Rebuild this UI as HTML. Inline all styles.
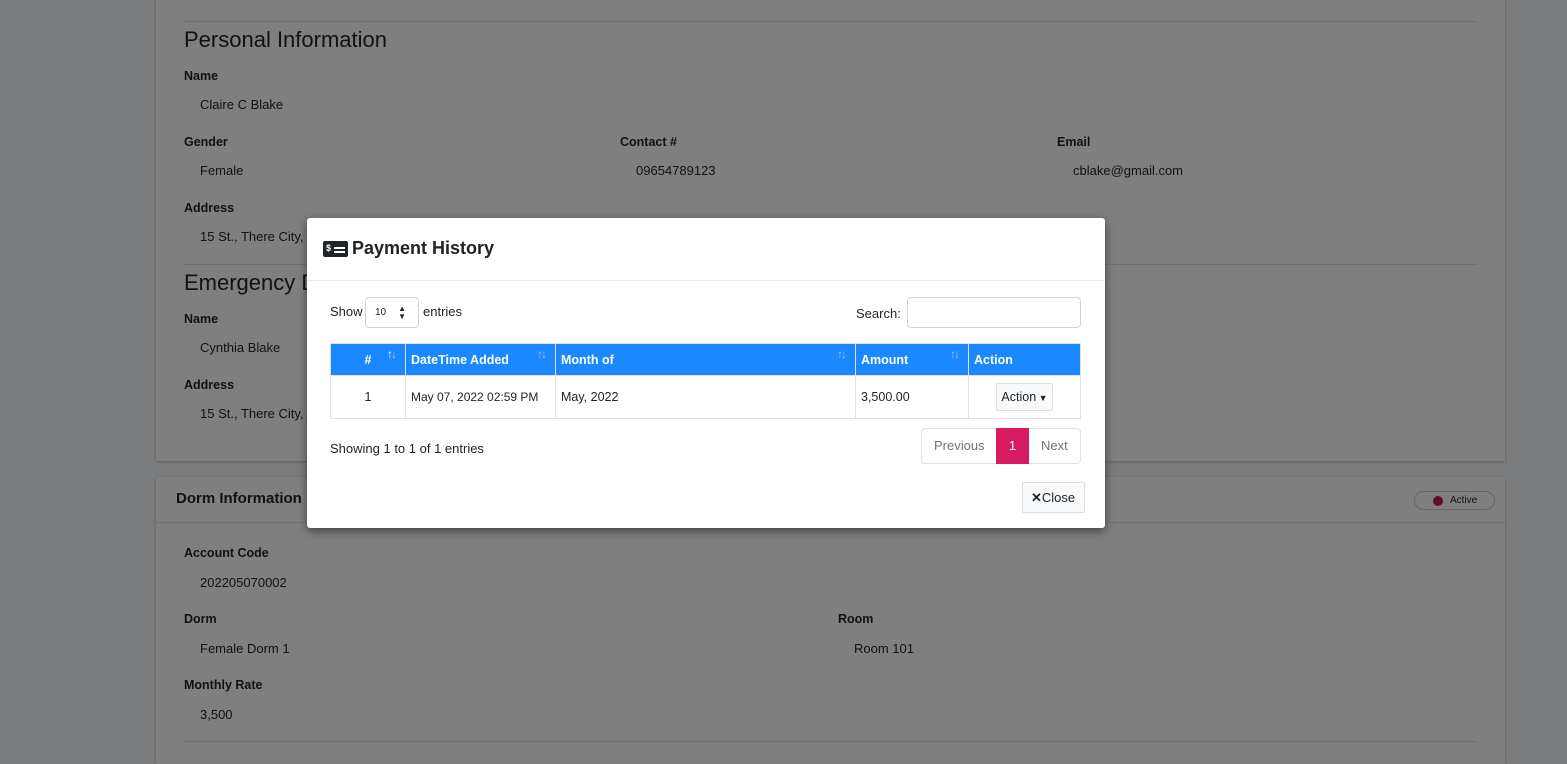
<!DOCTYPE html>
<html style="overflow:hidden;height:764px"><head><meta charset="utf-8"><style>
*{box-sizing:border-box}
body{margin:0;width:1567px;height:764px;overflow:hidden;background:#f4f6f9;font-family:"Liberation Sans",sans-serif;font-size:13px;color:#212529;position:relative}
.card{position:absolute;left:156px;width:1349px;background:#fff;box-shadow:0 0 1px rgba(0,0,0,.13),0 1px 3px rgba(0,0,0,.2)}
.a{position:absolute;white-space:nowrap}
.lb{font-weight:bold;font-size:12.5px}
.hr{position:absolute;height:1px;background:#dee2e6}
.ov{position:absolute;left:0;top:0;width:1567px;height:764px;background:rgba(0,0,0,.5)}
.modal{position:absolute;left:307px;top:218px;width:798px;height:310px;background:#fff;border-radius:3px;box-shadow:0 3px 9px rgba(0,0,0,.5)}
th{background:#1a88ff;color:#fff;text-align:left;font-size:12.5px;padding:0 5px;height:32px;border-right:1px solid #dee2e6;position:relative;white-space:nowrap}
td{font-size:12.5px;padding:0 5px;height:43px;border:1px solid #dee2e6;white-space:nowrap}
table{border-collapse:collapse;position:absolute;left:23px;top:125px;width:751px;border:1px solid #dee2e6;table-layout:fixed}
.sort{position:absolute;right:10px;top:3px;color:#9cc9ff;font-size:12px;letter-spacing:-2px}
</style></head><body>
<div class="card" style="top:-10px;height:471px">
 <div class="hr" style="left:28px;right:28px;top:31px"></div>
 <div class="a" style="left:28px;top:37px;font-size:22px">Personal Information</div>
 <div class="a lb" style="left:28px;top:79px">Name</div>
 <div class="a" style="left:44px;top:107px">Claire C Blake</div>
 <div class="a lb" style="left:28px;top:145px">Gender</div>
 <div class="a" style="left:44px;top:173px">Female</div>
 <div class="a lb" style="left:464px;top:145px">Contact #</div>
 <div class="a" style="left:480px;top:173px">09654789123</div>
 <div class="a lb" style="left:901px;top:145px">Email</div>
 <div class="a" style="left:917px;top:173px">cblake@gmail.com</div>
 <div class="a lb" style="left:28px;top:211px">Address</div>
 <div class="a" style="left:44px;top:239px">15 St., There City, Any Province</div>
 <div class="hr" style="left:28px;right:28px;top:274px"></div>
 <div class="a" style="left:28px;top:280px;font-size:22px">Emergency Details</div>
 <div class="a lb" style="left:28px;top:322px">Name</div>
 <div class="a" style="left:44px;top:350px">Cynthia Blake</div>
 <div class="a" style="left:936px;top:350px">er</div>
 <div class="a lb" style="left:28px;top:388px">Address</div>
 <div class="a" style="left:44px;top:416px">15 St., There City, Any Province</div>
</div>
<div class="card" style="top:477px;height:287px">
 <div class="a" style="left:20px;top:13px;font-size:15px;font-weight:bold">Dorm Information</div>
 <div class="a" style="left:1258px;top:14px;width:81px;height:19px;border:1px solid #ccc;border-radius:10px;font-size:10px;padding:3px 0 0 35px">Active<span style="position:absolute;left:18px;top:4px;width:10px;height:10px;border-radius:50%;background:#c2185b"></span></div>
 <div class="hr" style="left:0;right:0;top:45px"></div>
 <div class="a lb" style="left:28px;top:69px">Account Code</div>
 <div class="a" style="left:44px;top:98px">202205070002</div>
 <div class="a lb" style="left:28px;top:135px">Dorm</div>
 <div class="a" style="left:44px;top:164px">Female Dorm 1</div>
 <div class="a lb" style="left:682px;top:135px">Room</div>
 <div class="a" style="left:698px;top:164px">Room 101</div>
 <div class="a lb" style="left:28px;top:201px">Monthly Rate</div>
 <div class="a" style="left:44px;top:230px">3,500</div>
 <div class="hr" style="left:28px;right:28px;top:264px"></div>
</div>
<div class="ov"></div>
<div class="modal">
 <div class="a" style="left:16px;top:23px;width:25px;height:16px;background:#212529;border-radius:2px;color:#fff;font-size:9px;font-weight:bold;padding:2px 0 0 3px">$<span style="position:absolute;left:11px;top:6px;width:11px;height:2px;background:#fff"></span><span style="position:absolute;left:11px;top:10px;width:11px;height:2px;background:#fff"></span></div>
 <div class="a" style="left:45px;top:20px;font-size:18px;font-weight:bold;color:#222">Payment History</div>
 <div class="hr" style="left:0;right:0;top:62px;background:#e9ecef"></div>
 <div class="a" style="left:23px;top:86px">Show</div>
 <div class="a" style="left:58px;top:79px;width:54px;height:31px;border:1px solid #ced4da;border-radius:4px;font-size:10px;padding:9px 0 0 9px">10<span style="position:absolute;right:12px;top:7px;font-size:8px;line-height:8px">▲<br>▼</span></div>
 <div class="a" style="left:116px;top:86px">entries</div>
 <div class="a" style="left:549px;top:88px">Search:</div>
 <div class="a" style="left:600px;top:79px;width:174px;height:31px;border:1px solid #ced4da;border-radius:4px"></div>
 <table>
  <colgroup><col style="width:75px"><col style="width:150px"><col style="width:300px"><col style="width:113px"><col></colgroup>
  <tr><th style="text-align:center">#<span class="sort"><b style="color:#fff">↑</b>↓</span></th><th>DateTime Added<span class="sort">↑↓</span></th><th>Month of<span class="sort">↑↓</span></th><th>Amount<span class="sort">↑↓</span></th><th>Action</th></tr>
  <tr><td style="text-align:center">1</td><td style="font-size:12px">May 07, 2022 02:59 PM</td><td>May, 2022</td><td>3,500.00</td><td style="text-align:center"><span style="display:inline-block;border:1px solid #ddd;background:#f8f9fa;padding:6px 4px;border-radius:2px">Action<span style="font-size:9px"> ▼</span></span></td></tr>
 </table>
 <div class="a" style="left:23px;top:223px">Showing 1 to 1 of 1 entries</div>
 <div class="a" style="left:614px;top:210px;width:160px;height:36px;border:1px solid #dee2e6;border-radius:4px;color:#6c757d">
  <span class="a" style="left:12px;top:9px">Previous</span>
  <span class="a" style="left:74px;top:-1px;width:33px;height:36px;background:#d81b60;color:#fff;text-align:center;padding-top:10px">1</span>
  <span class="a" style="left:119px;top:9px">Next</span>
 </div>
 <div class="a" style="left:715px;top:264px;width:63px;height:31px;border:1px solid #ddd;background:#f8f9fa;border-radius:2px;padding:7px 0 0 8px"><b>✕</b>Close</div>
</div>
</body></html>
